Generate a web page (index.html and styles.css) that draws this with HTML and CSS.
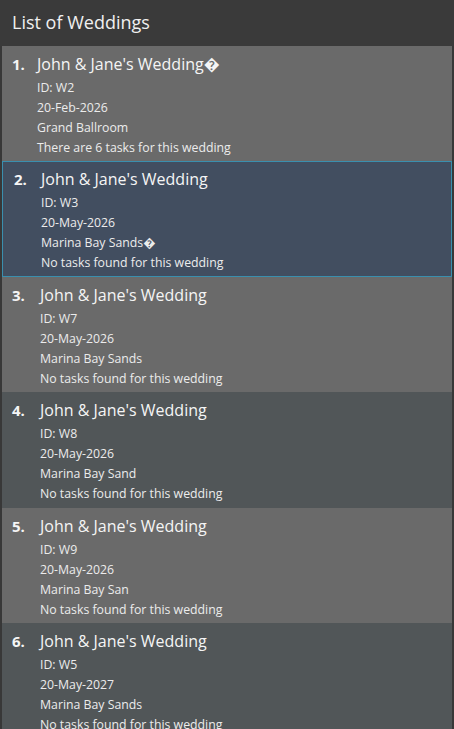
FILE: index.html
```html
<!DOCTYPE html>
<html>
<head>
<meta charset="utf-8">
<link rel="stylesheet" href="styles.css">
</head>
<body>
<div class="app">
  <div class="header">List of Weddings</div>
  <div class="list">
    <div class="card odd">
      <div class="index narrow">1.</div>
      <div class="body">
        <div class="title">John &amp; Jane's Wedding&#xFFFD;</div>
        <div class="line">ID: W2</div>
        <div class="line">20-Feb-2026</div>
        <div class="line">Grand Ballroom</div>
        <div class="line">There are 6 tasks for this wedding</div>
      </div>
    </div>
    <div class="card selected">
      <div class="index">2.</div>
      <div class="body">
        <div class="title">John &amp; Jane's Wedding</div>
        <div class="line">ID: W3</div>
        <div class="line">20-May-2026</div>
        <div class="line">Marina Bay Sands&#xFFFD;</div>
        <div class="line">No tasks found for this wedding</div>
      </div>
    </div>
    <div class="card odd">
      <div class="index">3.</div>
      <div class="body">
        <div class="title">John &amp; Jane's Wedding</div>
        <div class="line">ID: W7</div>
        <div class="line">20-May-2026</div>
        <div class="line">Marina Bay Sands</div>
        <div class="line">No tasks found for this wedding</div>
      </div>
    </div>
    <div class="card even">
      <div class="index">4.</div>
      <div class="body">
        <div class="title">John &amp; Jane's Wedding</div>
        <div class="line">ID: W8</div>
        <div class="line">20-May-2026</div>
        <div class="line">Marina Bay Sand</div>
        <div class="line">No tasks found for this wedding</div>
      </div>
    </div>
    <div class="card odd">
      <div class="index">5.</div>
      <div class="body">
        <div class="title">John &amp; Jane's Wedding</div>
        <div class="line">ID: W9</div>
        <div class="line">20-May-2026</div>
        <div class="line">Marina Bay San</div>
        <div class="line">No tasks found for this wedding</div>
      </div>
    </div>
    <div class="card even">
      <div class="index">6.</div>
      <div class="body">
        <div class="title">John &amp; Jane's Wedding</div>
        <div class="line">ID: W5</div>
        <div class="line">20-May-2027</div>
        <div class="line">Marina Bay Sands</div>
        <div class="line">No tasks found for this wedding</div>
      </div>
    </div>
  </div>
</div>
</body>
</html>
```
FILE: styles.css
```css
html, body {
  margin: 0;
  padding: 0;
  background: #383838;
  height: 100%;
  overflow: hidden;
}
.app {
  font-family: "Open Sans", "Noto Sans", sans-serif;
  color: #f2f2f2;
}
.header {
  height: 46px;
  box-sizing: border-box;
  padding-left: 12px;
  padding-bottom: 2px;
  display: flex;
  align-items: center;
  font-size: 18px;
  background: #3a3a3a;
  color: #f0f0f0;
}
.list {
  padding: 0 2px;
}
.card {
  height: 115.4px;
  box-sizing: border-box;
  display: flex;
  padding: 7px 10px 0 10px;
  overflow: hidden;
}
.odd { background: #6a6a6a; }
.even { background: #515658; }
.selected {
  background: #424e60;
  border: 1px solid #3a8fae;
  padding: 6px 9px 0 11px;
}
.index {
  width: 28px;
  font-size: 15px;
  font-weight: 700;
  line-height: 22px;
  color: #f5f5f5;
}
.index.narrow { width: 25px; }
.selected .index { width: 27px; }
.title {
  font-size: 16px;
  font-weight: 500;
  line-height: 22px;
  color: #f5f5f5;
  margin-bottom: 3px;
}
.line {
  font-size: 12.3px;
  line-height: 20px;
  color: #ececec;
}
```
